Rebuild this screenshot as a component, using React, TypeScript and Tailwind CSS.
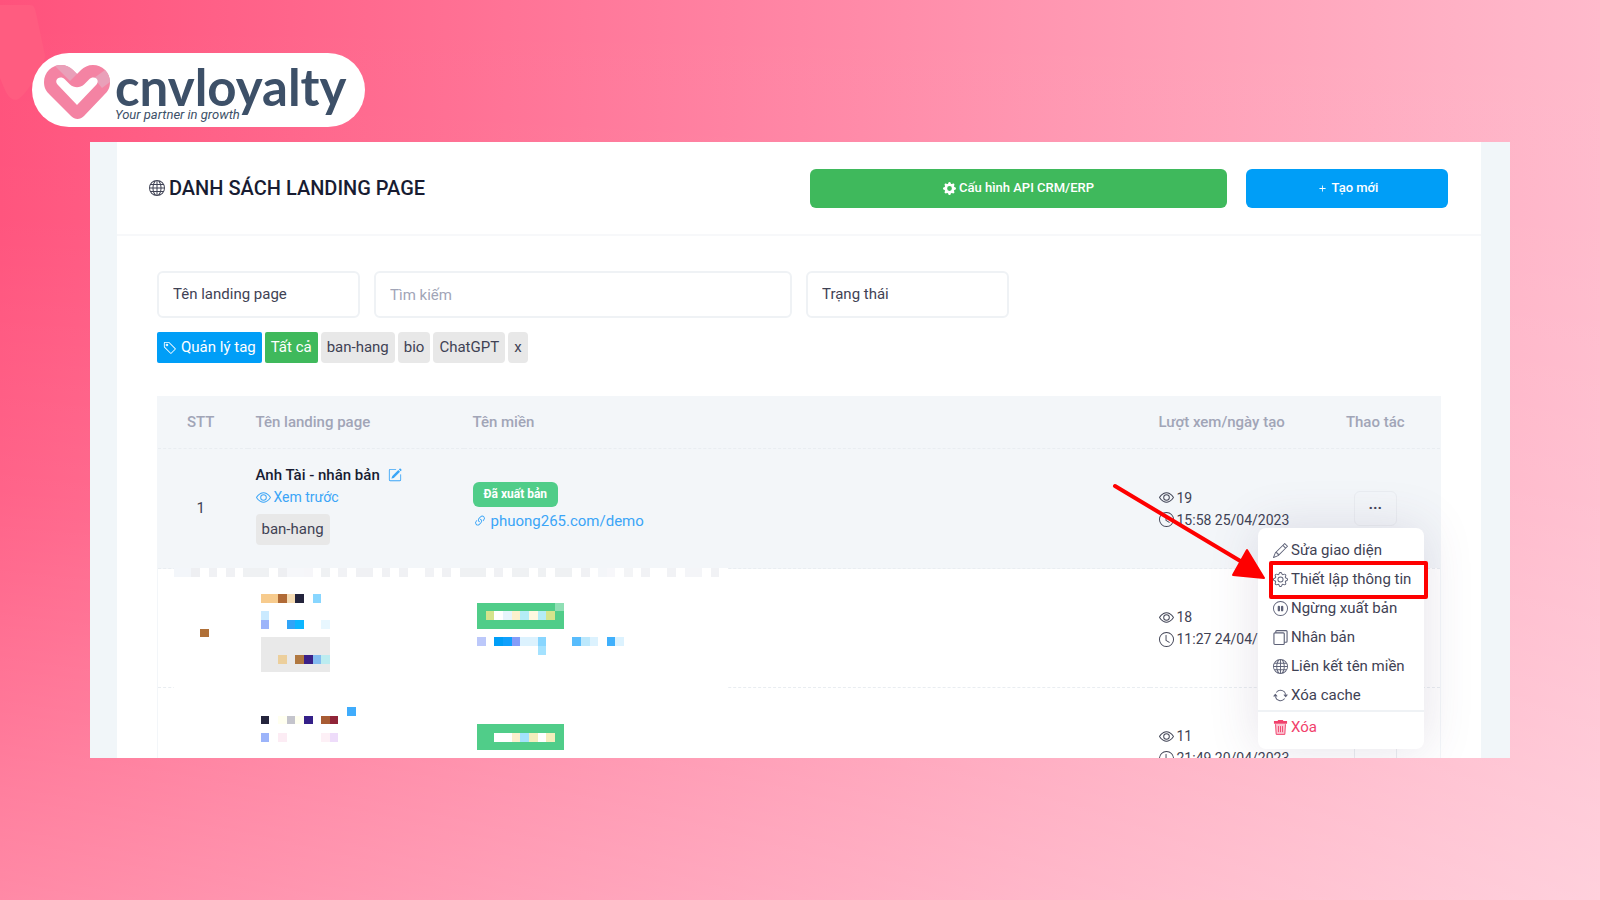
import type { ComponentType, SVGProps } from "react";
import {
  BsArrowRepeat,
  BsClock,
  BsEye,
  BsGear,
  BsGearFill,
  BsGlobe,
  BsLink45Deg,
  BsPauseCircle,
  BsPencil,
  BsPencilSquare,
  BsPlus,
  BsTag,
} from "react-icons/bs";

type Cell = [col: number, row: number, w: number, h: number, fill: string];

type LandingPage = {
  id: number;
  views: number;
  createdAt: string;
  hidden?: boolean;
};

type MenuItem = {
  label: string;
  icon: ComponentType<SVGProps<SVGSVGElement>>;
  active?: boolean;
};

function CopyIcon(props: SVGProps<SVGSVGElement>) {
  return (
    <svg viewBox="0 0 16 16" fill="none" stroke="currentColor" strokeWidth="1.2" {...props}>
      <rect x="1" y="3" width="11" height="12.4" rx="1" />
      <path d="M3 3V1.6c0-.6.4-1 1-1h10c.6 0 1 .4 1 1V12c0 .6-.4 1-1 1h-2" />
    </svg>
  );
}

function TrashIcon(props: SVGProps<SVGSVGElement>) {
  return (
    <svg viewBox="0 0 16 16" fill="currentColor" {...props}>
      <path d="M5.5 0h5l.6 1H15v3H1V1h3.9Z" />
      <path d="M2.5 4h11l-.7 11c0 .6-.5 1-1 1H4.2c-.5 0-1-.4-1-1Z" fillOpacity="0.3" />
      <path
        d="M2.7 4.5 3.4 15.3h9.2l.7-10.800M5.8 6.500v6.500M8 6.500v6.500M10.2 6.500v6.500"
        fill="none"
        stroke="currentColor"
        strokeWidth="1"
      />
    </svg>
  );
}

const pages: LandingPage[] = [
  { id: 1, views: 19, createdAt: "15:58 25/04/2023" },
  { id: 2, views: 18, createdAt: "11:27 24/04/2023", hidden: true },
  { id: 3, views: 11, createdAt: "21:49 20/04/2023", hidden: true },
];

const tags = ["ban-hang", "bio", "ChatGPT", "x"];

const menu: MenuItem[] = [
  { label: "Sửa giao diện", icon: BsPencil as MenuItem["icon"] },
  { label: "Thiết lập thông tin", icon: BsGear as MenuItem["icon"], active: true },
  { label: "Ngừng xuất bản", icon: BsPauseCircle as MenuItem["icon"] },
  { label: "Nhân bản", icon: CopyIcon },
  { label: "Liên kết tên miền", icon: BsGlobe as MenuItem["icon"] },
  { label: "Xóa cache", icon: BsArrowRepeat as MenuItem["icon"] },
];

// Pixelated cover over the private rows, in grid cells
const cells: Cell[] = [
  [0, 0, 2, 1, "#f3f6fa"], [2, 0, 1, 1, "#eeeff2"], [4, 0, 1, 1, "#f0f1f4"], [6, 0, 1, 1, "#f0f1f4"],
  [8, 0, 3, 1, "#eff1f3"], [12, 0, 1, 1, "#eeeff2"], [13, 0, 2, 1, "#f6f7fa"], [15, 0, 1, 1, "#f6f6f9"],
  [17, 0, 1, 1, "#eff1f3"], [19, 0, 1, 1, "#f1f2f5"], [21, 0, 2, 1, "#f0f1f4"], [24, 0, 1, 1, "#f0f1f4"],
  [26, 0, 1, 1, "#f0f1f4"], [29, 0, 1, 1, "#f1f2f5"], [31, 0, 1, 1, "#f0f1f4"], [33, 0, 3, 1, "#eff1f3"],
  [37, 0, 1, 1, "#f0f1f4"], [39, 0, 2, 1, "#eff1f3"], [42, 0, 1, 1, "#eff1f3"], [44, 0, 2, 1, "#eff1f3"],
  [47, 0, 1, 1, "#f0f1f4"], [49, 0, 1, 1, "#f4f6f9"], [50, 0, 1, 1, "#f7f7fa"], [52, 0, 1, 1, "#f3f4f6"],
  [54, 0, 1, 1, "#f1f2f5"], [57, 0, 1, 1, "#f1f2f5"], [59, 0, 2, 1, "#f4f5f8"], [62, 0, 1, 1, "#f1f2f5"],

  [3, 7, 1, 1, "#b07038"],
  [10, 3, 2, 1, "#f7cb8d"], [12, 3, 1, 1, "#b06a36"], [13, 3, 1, 1, "#f5dcb4"], [14, 3, 1, 1, "#24243c"], [16, 3, 1, 1, "#88d6ff"],
  [10, 5, 1, 1, "#cbeaff"], [10, 6, 1, 1, "#9cb4fa"], [13, 6, 1, 1, "#30a4f8"], [14, 6, 1, 1, "#0cb6ff"], [17, 6, 1, 1, "#e8f7ff"],
  [10, 8, 8, 4, "#e9e9e9"],
  [12, 10, 1, 1, "#eccf9c"], [14, 10, 1, 1, "#b07840"], [15, 10, 1, 1, "#3a2088"], [16, 10, 1, 1, "#84bcf0"], [17, 10, 1, 1, "#bcecf0"],

  [35, 4, 10, 3, "#50cd89"], [44, 4, 1, 1, "#8fdfb4"],
  [36, 5, 1, 1, "#d4e48c"], [37, 5, 1, 1, "#ffffff"], [38, 5, 1, 1, "#e6f4fc"], [39, 5, 1, 1, "#fbf0cc"],
  [40, 5, 1, 1, "#b4ecf6"], [41, 5, 1, 1, "#fff8e0"], [42, 5, 1, 1, "#b4ecf6"], [43, 5, 1, 1, "#d4e48c"],
  [35, 8, 1, 1, "#bcc8fa"], [37, 8, 1, 1, "#009ef7"], [38, 8, 1, 1, "#10a0fc"], [39, 8, 1, 1, "#849cf8"],
  [40, 8, 2, 1, "#dcf2fe"], [42, 8, 1, 1, "#88d6ff"], [42, 9, 1, 1, "#a4e2ff"],
  [46, 8, 1, 1, "#58bcfc"], [47, 8, 1, 1, "#bce8fc"], [48, 8, 1, 1, "#dcf2fe"], [50, 8, 1, 1, "#40b0fc"], [51, 8, 1, 1, "#dcf2fe"],

  [20, 16, 1, 1, "#40acfc"],
  [10, 17, 1, 1, "#24243c"], [12, 17, 1, 1, "#fffff0"], [13, 17, 1, 1, "#c4c4cc"], [14, 17, 1, 1, "#fffff0"],
  [15, 17, 1, 1, "#342088"], [17, 17, 1, 1, "#a85c34"], [18, 17, 1, 1, "#902438"],
  [10, 19, 1, 1, "#9cb4fa"], [12, 19, 1, 1, "#fcecf4"], [17, 19, 1, 1, "#fdf0f6"], [18, 19, 1, 1, "#eedcfa"],
  [35, 18, 10, 3, "#50cd89"],
  [37, 19, 2, 1, "#ffffff"], [39, 19, 1, 1, "#fbf0cc"], [40, 19, 1, 1, "#a4e2fc"], [41, 19, 1, 1, "#f4eebc"],
  [42, 19, 1, 1, "#ffffff"], [43, 19, 1, 1, "#f4eebc"],
];

function Logo() {
  return (
    <div className="flex h-[74px] w-[333px] items-center rounded-full bg-white pt-1 pl-3">
      <svg viewBox="0 0 66 54" className="h-[54px] w-[66px] shrink-0" aria-hidden="true">
        <path
          fill="#f483a3"
          d="M17 0C8 0 0 7 0 17c0 6 2 9 6 13l21 21c4 4 9 4 13 0l20-21c4-4 6-7 6-13C66 7 58 0 49 0c-5 0-9 2-12 5l-4 4-4-4C26 2 22 0 17 0Z"
        />
        <path fill="#e9a0b9" d="M11 1c2-1 4-1 6-1 5 0 9 2 12 5l4 4-7 7Z" />
        <path fill="#e9a0b9" d="M61 5c3 3 5 7 5 12l-8 6c-3-3-5-7-8-10Z" />
        <path
          fill="#fff"
          d="M33 40 13.5 19.5C11 16.5 12.5 12.5 16.5 12.5c2 0 3 .5 4.5 2l5 5c4 3.5 10 3.5 14 0l5-5c1.500-1.500 2.500-2 4.500-2 4 0 5.500 4 3 7Z"
        />
      </svg>
      <div className="ml-[5px] pt-1 text-[#3d5068]">
        <p className="font-['Lato',sans-serif] text-[51px] leading-[42px] font-bold">cnvloyalty</p>
        <p className="font-['Roboto',sans-serif] text-[13px] leading-[14px] italic">Your partner in growth</p>
      </div>
    </div>
  );
}

function ActionMenu() {
  return (
    <div className="absolute top-[79px] right-4 z-20 w-[166px] rounded-lg bg-white pt-2 text-left shadow-[0_0_50px_rgba(82,63,105,0.15)]">
      <ul>
        {menu.map(({ label, icon: Icon, active }) => (
          <li key={label} className="relative">
            <button type="button" className="flex h-[29px] w-full items-center gap-[3px] pl-[15px] whitespace-nowrap">
              <Icon className="size-[15px] shrink-0 text-[#5e6278]" />
              {label}
            </button>
            {active ? (
              <span className="absolute -top-1 -right-1 left-[11px] h-[38px] rounded-xs border-4 border-[#fe0000]" />
            ) : null}
          </li>
        ))}
      </ul>
      <button
        type="button"
        className="flex h-[39px] w-full items-center gap-[3px] border-t-2 border-[#eff2f5] pb-[6px] pl-[15px] text-[#f1416c]"
      >
        <TrashIcon className="size-[15px]" />
        Xóa
      </button>
    </div>
  );
}

function PageRow({ page }: { page: LandingPage }) {
  return (
    <tr
      className={
        page.hidden
          ? "h-[119px] border-b border-dashed border-[#e9edf1]"
          : "h-[120px] border-b border-dashed border-[#e9edf1] bg-[#f3f6f9]"
      }
    >
      <td className="pr-1 text-center">{page.hidden ? null : page.id}</td>
      <td className="pb-2 pl-2">
        {page.hidden ? null : (
          <>
            <p className="flex items-center gap-2 leading-[22px] font-medium text-[#181c32]">
              Anh Tài - nhân bản
              <BsPencilSquare className="size-[14px] text-[#3ba5f7]" />
            </p>
            <a href="#preview" className="flex items-center gap-[3px] text-[14px] leading-[22px] text-[#3ba5f7]">
              <BsEye className="size-[15px]" />
              Xem trước
            </a>
            <span className="mt-[6px] inline-block rounded-sm bg-[#e8e8e8] px-[6px] leading-[31px]">ban-hang</span>
          </>
        )}
      </td>
      <td className="pb-1 pl-[9px]">
        {page.hidden ? null : (
          <>
            <span className="block w-fit rounded-md bg-[#50cd89] px-[11px] text-[12px] leading-[25px] font-bold text-white">
              Đã xuất bản
            </span>
            <a href="#demo" className="mt-[3px] flex items-center gap-1 leading-[22px] text-[#3ba5f7]">
              <BsLink45Deg className="size-[14px]" />
              phuong265.com/demo
            </a>
          </>
        )}
      </td>
      <td className="pl-[9px] text-[14px] leading-[22px]">
        <p className="flex items-center gap-[3px]">
          <BsEye className="size-[15px]" />
          {page.views}
        </p>
        <p className="flex items-center gap-[3px] whitespace-nowrap">
          <BsClock className="size-[15px]" />
          {page.createdAt}
        </p>
      </td>
      <td className="relative text-center">
        <button
          type="button"
          aria-label="Thao tác"
          className="mx-auto block h-[35px] w-[43px] rounded-md border border-[#eaedf1] font-bold"
        >
          ···
        </button>
        {page.id === 1 ? <ActionMenu /> : null}
      </td>
    </tr>
  );
}

export default function App() {
  return (
    <main className="relative min-h-screen bg-[linear-gradient(180deg,rgba(255,255,255,0)_0%,rgba(255,255,255,0.02)_25%,rgba(255,255,255,0.1)_55%,rgba(255,255,255,0.23)_82%,rgba(255,255,255,0.32)_100%),linear-gradient(90deg,#ff527c_0%,#ff6a8f_23%,#ff86a5_50%,#ffa3ba_77%,#ffbacc_100%)] px-[90px] pt-[53px] font-['Roboto',sans-serif] text-[15px] text-[#3f4254]">
      <svg viewBox="0 0 46 101" className="absolute top-0 left-0 h-[101px] w-[46px]" aria-hidden="true">
        <path d="M0 5h30c4 0 5 3 6 8l9 42c1 10-22 45-29 45-8 0-11-10-16-22Z" fill="#ff5c80" />
      </svg>

      <header className="relative -ml-[58px]">
        <Logo />
      </header>

      <section className="mt-[15px] h-[616px] overflow-hidden bg-[#f1f6f9] pr-[29px] pl-[27px]">
        <div className="min-h-full bg-white">
          <div className="flex h-[94px] items-center justify-between border-b-2 border-[#f7f8fa] pr-[33px] pl-8">
            <h1 className="flex items-center gap-1 text-[20px] font-medium text-[#181c32]">
              <BsGlobe className="size-4 text-[#3f4254]" />
              DANH SÁCH LANDING PAGE
            </h1>
            <div className="flex w-1/2 justify-end gap-[19px] text-[13px] font-medium text-white">
              <button
                type="button"
                className="flex h-[39px] w-[417px] items-center justify-center gap-[3px] rounded-md bg-[#3fb95c]"
              >
                <BsGearFill className="size-[13px]" />
                Cấu hình API CRM/ERP
              </button>
              <button
                type="button"
                className="flex h-[39px] w-[202px] items-center justify-center gap-[3px] rounded-md bg-[#009ef7]"
              >
                <BsPlus className="size-[13px]" />
                Tạo mới
              </button>
            </div>
          </div>

          <div className="px-10 pt-[35px]">
            <form className="flex gap-[14px]">
              <select
                aria-label="Tên landing page"
                className="h-[47px] w-[203px] appearance-none rounded-md border-2 border-[#eff2f5] px-[14px]"
              >
                <option>Tên landing page</option>
              </select>
              <input
                aria-label="Tìm kiếm"
                placeholder="Tìm kiếm"
                className="h-[47px] w-[418px] rounded-md border-2 border-[#eff2f5] px-[14px] placeholder:text-[#a1a5b7]"
              />
              <select
                aria-label="Trạng thái"
                className="h-[47px] w-[203px] appearance-none rounded-md border-2 border-[#eff2f5] px-[14px]"
              >
                <option>Trạng thái</option>
              </select>
            </form>

            <div className="mt-[14px] flex gap-[3px] leading-[31px]">
              <button type="button" className="flex items-center gap-1 rounded-xs bg-[#009ef7] px-[6px] text-white">
                <BsTag className="size-[14px]" />
                Quản lý tag
              </button>
              <button type="button" className="rounded-xs bg-[#3fb95c] px-[6px] text-white">
                Tất cả
              </button>
              {tags.map((tag) => (
                <button key={tag} type="button" className="rounded-sm bg-[#e8e8e8] px-[6px]">
                  {tag}
                </button>
              ))}
            </div>

            <div className="relative mt-[33px]">
              <table className="w-full table-fixed border-collapse border border-[#f3f6f9]">
                <thead>
                  <tr className="h-[52px] border-b border-dashed border-[#e9edf1] bg-[#f3f6f9] text-left text-[#a1a5b7]">
                    <th className="w-[90px] pr-1 text-center font-medium">STT</th>
                    <th className="w-[216px] pl-2 font-medium">Tên landing page</th>
                    <th className="pl-[9px] font-medium">Tên miền</th>
                    <th className="w-[161px] pl-[9px] font-medium">Lượt xem/ngày tạo</th>
                    <th className="w-[130px] text-center font-medium">Thao tác</th>
                  </tr>
                </thead>
                <tbody>
                  {pages.map((page) => (
                    <PageRow key={page.id} page={page} />
                  ))}
                </tbody>
              </table>

              <svg
                viewBox="0 0 64 22"
                preserveAspectRatio="none"
                className="absolute top-[172px] left-[17px] h-[191px] w-[554px]"
                shapeRendering="crispEdges"
                aria-hidden="true"
              >
                <rect width="64" height="22" fill="#fff" />
                {cells.map(([col, row, w, h, fill], i) => (
                  <rect key={i} x={col} y={row} width={w} height={h} fill={fill} />
                ))}
              </svg>

              <svg
                viewBox="0 0 156 98"
                className="absolute top-[86px] right-[174px] z-30 h-[98px] w-[156px]"
                fill="#fe0000"
                aria-hidden="true"
              >
                <path d="M4 4 136 83" stroke="#fe0000" strokeWidth="4" strokeLinecap="round" />
                <path d="M136 68 122 93 153 96Z" stroke="#fe0000" strokeWidth="2" strokeLinejoin="round" />
              </svg>
            </div>
          </div>
        </div>
      </section>
    </main>
  );
}
